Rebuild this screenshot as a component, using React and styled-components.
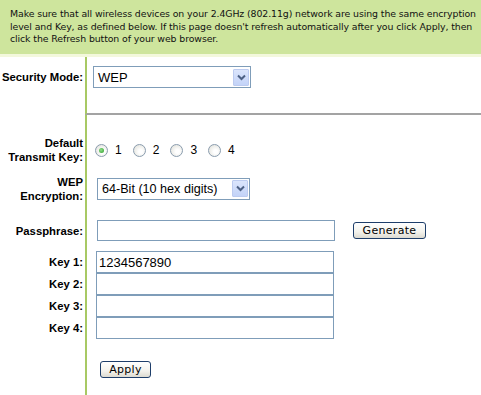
import React from "react";
import styled, { createGlobalStyle } from "styled-components";

const GlobalStyle = createGlobalStyle`
  html, body {
    margin: 0;
    padding: 0;
    background: #ffffff;
    overflow: hidden;
  }
  body {
    font-family: "Liberation Sans", Arial, sans-serif;
    color: #000;
  }
`;

function Chevron() {
  return (
    <svg width="9" height="7" viewBox="0 0 9 7">
      <path d="M1 1.5 L4.5 5 L8 1.5" fill="none" stroke="#4d6185" strokeWidth="2" />
    </svg>
  );
}

function FakeSelect({ value, width, font }) {
  return (
    <SelectBox $w={width}>
      <SelectText $font={font}>{value}</SelectText>
      <ArrowBox>
        <Chevron />
      </ArrowBox>
    </SelectBox>
  );
}

function FormRow({ label, top = 0, h, left = 6, bottom = 0, line, children }) {
  return (
    <Row>
      <Label $top={top} $h={h} $bottom={bottom}>
        {label}
      </Label>
      <Cell $top={top} $h={h} $left={left} $bottom={bottom} $line={line}>
        {children}
      </Cell>
    </Row>
  );
}

export default function App() {
  const keys = [
    { name: "Key 1:", value: "1234567890", top: 9 },
    { name: "Key 2:", value: "", top: 0 },
    { name: "Key 3:", value: "", top: 0 },
    { name: "Key 4:", value: "", top: 0 },
  ];

  return (
    <>
      <GlobalStyle />
      <Page>
        <Notice>
          Make sure that all wireless devices on your 2.4GHz (802.11g) network are using the same encryption
          <br />
          level and Key, as defined below. If this page doesn't refresh automatically after you click Apply, then
          <br />
          click the Refresh button of your web browser.
        </Notice>
        <Strip />

        <FormRow label="Security Mode:" top={9} h={22} left={6} bottom={25} line>
          <FakeSelect value="WEP" width={158} font={13} />
        </FormRow>

        <FormRow
          label={
            <>
              Default
              <br />
              Transmit Key:
            </>
          }
          top={21}
          h={28}
          left={8}
        >
          <RadioGroup>
            {[1, 2, 3, 4].map((n) => (
              <RadioItem key={n}>
                <Radio $checked={n === 1} />
                <RadioLabel>{n}</RadioLabel>
              </RadioItem>
            ))}
          </RadioGroup>
        </FormRow>

        <FormRow
          label={
            <>
              WEP
              <br />
              Encryption:
            </>
          }
          top={11}
          h={27}
          left={10}
        >
          <FakeSelect value="64-Bit (10 hex digits)" width={153} font={12.6} />
        </FormRow>

        <FormRow label="Passphrase:" top={17} h={23} left={10}>
          <TextField value="" readOnly $w={238} />
          <Button $w={73}>Generate</Button>
        </FormRow>

        {keys.map((k) => (
          <FormRow key={k.name} label={k.name} top={k.top} h={22} left={9}>
            <TextField value={k.value} readOnly $w={238} $tall />
          </FormRow>
        ))}

        <FormRow label="" top={22} h={17} left={13} bottom={17}>
          <Button $w={51} $solo>
            Apply
          </Button>
        </FormRow>
      </Page>
    </>
  );
}

const Page = styled.div`
  width: 481px;
  height: 395px;
  overflow: hidden;
  display: flex;
  flex-direction: column;
`;

const Notice = styled.div`
  background: #cee59d;
  height: 54px;
  flex-shrink: 0;
  box-sizing: border-box;
  padding: 8px 0 0 10px;
  font-family: "DejaVu Sans", Verdana, sans-serif;
  font-size: 9.4px;
  line-height: 12.5px;
  letter-spacing: -0.1px;
  white-space: nowrap;
  color: #111;
`;

const Strip = styled.div`
  height: 3px;
  flex-shrink: 0;
  background: #f3f8dc;
`;

const Row = styled.div`
  display: grid;
  grid-template-columns: 85px 1fr;
  flex-shrink: 0;
`;

const Label = styled.div`
  padding-top: ${(p) => p.$top}px;
  padding-bottom: ${(p) => p.$bottom}px;
  height: ${(p) => p.$h}px;
  padding-right: 2px;
  display: flex;
  align-items: ${(p) => (p.$bottom ? "flex-start" : "center")};
  justify-content: flex-end;
  text-align: right;
  font-weight: bold;
  font-size: 11.3px;
  line-height: ${(p) => (p.$bottom ? `${p.$h}px` : "14px")};
  white-space: nowrap;
`;

const Cell = styled.div`
  padding-top: ${(p) => p.$top}px;
  padding-bottom: ${(p) => p.$bottom}px;
  padding-left: ${(p) => p.$left}px;
  height: ${(p) => p.$h}px;
  border-left: 2px solid #a8c964;
  border-bottom: ${(p) => (p.$line ? "2px solid #a3a3a3" : "none")};
  display: flex;
  align-items: center;
`;

const SelectBox = styled.div`
  width: ${(p) => p.$w}px;
  height: 22px;
  box-sizing: border-box;
  border: 1px solid #7f9db9;
  background: #fff;
  display: flex;
  align-items: center;
  justify-content: space-between;
  padding: 1px 1px 1px 4px;
`;

const SelectText = styled.span`
  font-size: ${(p) => p.$font}px;
`;

const ArrowBox = styled.span`
  width: 16px;
  height: 17px;
  box-sizing: border-box;
  border: 1px solid #bccbf0;
  border-radius: 1px;
  background: linear-gradient(180deg, #dbe5fc 0%, #c3d3f8 100%);
  display: flex;
  align-items: center;
  justify-content: center;
`;

const RadioGroup = styled.div`
  display: flex;
  gap: 11px;
`;

const RadioItem = styled.label`
  display: flex;
  align-items: center;
  gap: 7px;
`;

const Radio = styled.span`
  width: 11px;
  height: 11px;
  border-radius: 50%;
  border: 1px solid #8a9cae;
  background: radial-gradient(circle at 60% 60%, #ffffff 20%, #dcdcd4 100%);
  position: relative;

  &::after {
    content: "";
    display: ${(p) => (p.$checked ? "block" : "none")};
    position: absolute;
    left: 3px;
    top: 3px;
    width: 5px;
    height: 5px;
    border-radius: 50%;
    background: radial-gradient(circle at 40% 40%, #8fe08a, #2b9a27);
  }
`;

const RadioLabel = styled.span`
  font-size: 12px;
`;

const TextField = styled.input`
  width: ${(p) => p.$w}px;
  height: ${(p) => (p.$tall ? 22 : 21)}px;
  box-sizing: border-box;
  border: 1px solid #7f9db9;
  margin: 0;
  padding: 0 2px;
  font-family: "Liberation Sans", Arial, sans-serif;
  font-size: 13px;
  color: #000;
  outline: none;
`;

const Button = styled.button`
  width: ${(p) => p.$w}px;
  height: 17px;
  margin-left: ${(p) => (p.$solo ? 0 : 18)}px;
  padding: 0;
  border: 1px solid #1e3e6a;
  border-radius: 3px;
  background: linear-gradient(180deg, #ffffff 0%, #f3f2ec 60%, #dcdad0 100%);
  font-family: "DejaVu Sans", Verdana, sans-serif;
  font-size: 11px;
  letter-spacing: 0.3px;
  color: #000;
`;
